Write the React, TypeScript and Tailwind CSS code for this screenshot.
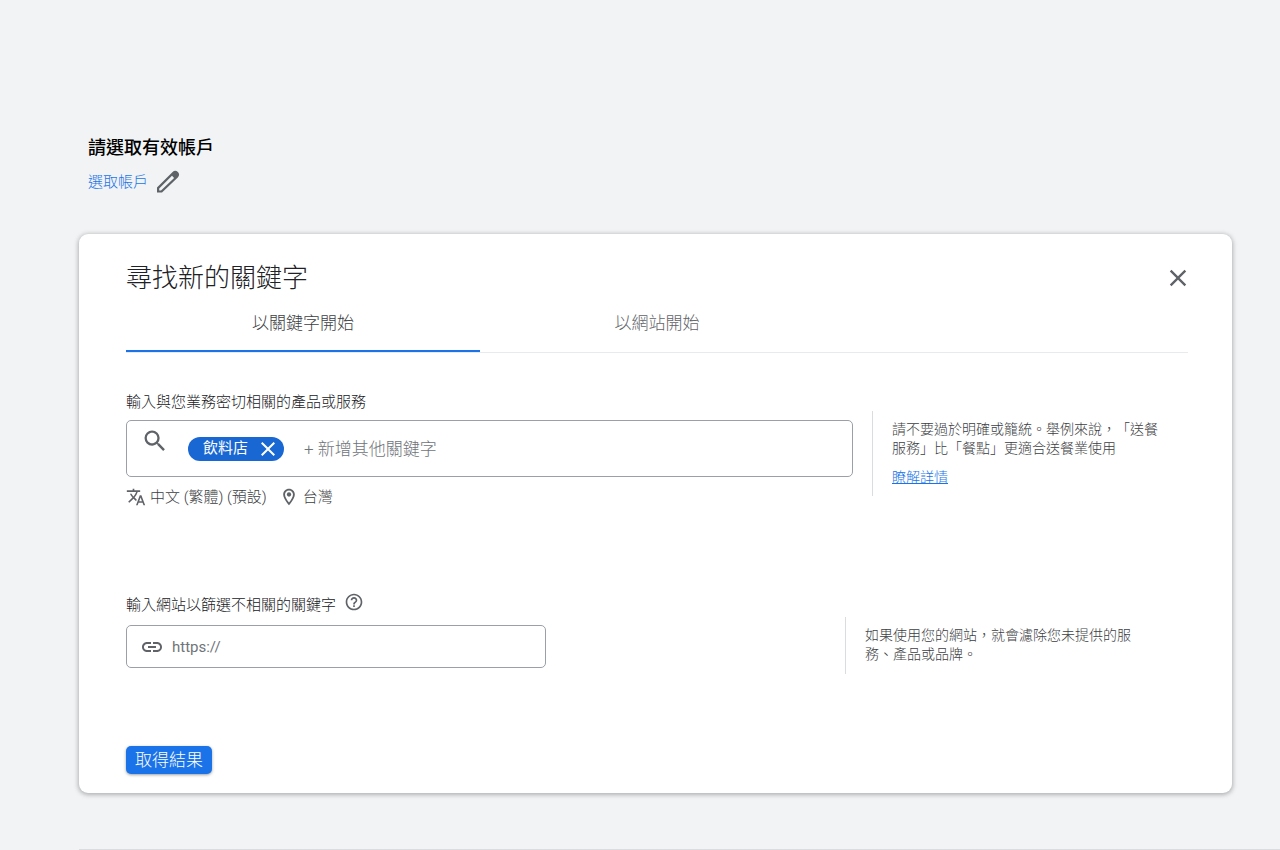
import { useState } from 'react';
import { MdClose, MdHelpOutline, MdLink, MdSearch, MdTranslate } from 'react-icons/md';

const tabs = ['以關鍵字開始', '以網站開始'];

function PencilIcon() {
  return (
    <svg width="24" height="24" viewBox="0 0 24 24" fill="currentColor" aria-hidden="true">
      <path
        fillRule="evenodd"
        d="M1 17.6 16.6 2Q19.2-.4 21.9 2 24.3 4.8 21.8 7.4L6 22.6H1ZM3.2 18.6V20.400H5L18.100 7.900 16 5.800Z"
      />
    </svg>
  );
}

function PinIcon() {
  return (
    <svg width="20" height="20" viewBox="0 0 24 24" fill="currentColor" aria-hidden="true">
      <path
        fillRule="evenodd"
        d="M12 2C8.1 2 5 5.1 5 9c0 5.3 7 13 7 13s7-7.7 7-13c0-3.9-3.1-7-7-7Zm0 2.2c2.7 0 4.8 2.1 4.8 4.8 0 2.8-2.6 6.9-4.8 9.600C9.8 15.9 7.2 11.8 7.2 9c0-2.7 2.1-4.8 4.8-4.8Z"
      />
      <circle cx="12" cy="9" r="2.6" />
    </svg>
  );
}

function AccountPicker() {
  return (
    <header className="pl-[9px]">
      <h1 className="text-[18px] leading-6 font-medium text-black">請選取有效帳戶</h1>
      <div className="mt-[7px] flex h-[30px] items-center gap-2">
        <a href="#account" className="text-[15px] leading-5 text-[#1a73e8]">
          選取帳戶
        </a>
        <button type="button" aria-label="編輯帳戶" className="text-[#5f6368]">
          <PencilIcon />
        </button>
      </div>
    </header>
  );
}

export default function App() {
  const [activeTab, setActiveTab] = useState(0);
  const [keywords, setKeywords] = useState(['飲料店']);

  return (
    <div
      lang="zh-Hant"
      className="min-h-screen bg-[#f1f3f4] pt-[136px] pl-[79px] font-light text-[#3c4043] [text-spacing-trim:space-all] font-['Roboto','Noto_Sans_CJK_TC',sans-serif]"
    >
      <AccountPicker />

      <main className="mt-[37px] mr-12 rounded-[9px] bg-white pt-7 pr-11 pb-[19px] pl-[47px] shadow-[0_1px_4px_1px_rgba(60,64,67,0.35)]">
        {/* Title */}
        <div className="flex items-center justify-between">
          <h2 className="text-[26px] leading-8 text-[#202124]">尋找新的關鍵字</h2>
          <button type="button" aria-label="關閉" className="-mr-1 text-[#5f6368]">
            <MdClose size={28} />
          </button>
        </div>

        {/* Tabs */}
        <div role="tablist" className="grid grid-cols-3 border-b border-[#e8eaed]">
          {tabs.map((tab, index) => (
            <button
              key={tab}
              type="button"
              role="tab"
              aria-selected={index === activeTab}
              onClick={() => setActiveTab(index)}
              className={
                index === activeTab
                  ? 'h-[58px] border-b-2 border-[#1a73e8] pt-1 text-[17px] text-[#3c4043]'
                  : 'h-[58px] border-b-2 border-transparent pt-1 text-[17px] text-[#5f6368]'
              }
            >
              {tab}
            </button>
          ))}
        </div>

        {/* Keywords */}
        <section className="mt-[39px] flex items-start">
          <div className="min-w-0 flex-1">
            <label htmlFor="keyword" className="block text-[15px] leading-5 text-[#202124]">
              輸入與您業務密切相關的產品或服務
            </label>
            <div className="mt-2 flex h-[57px] items-center rounded-[5px] border border-[#9aa0a6] px-[14px]">
              <MdSearch size={28} className="mt-1.5 shrink-0 self-start text-[#5f6368]" />
              {keywords.map((keyword) => (
                <span
                  key={keyword}
                  className="ml-[19px] flex h-6 shrink-0 items-center gap-2 rounded-full bg-[#1967d2] pr-1 pl-[15px] text-[15px] font-normal text-white"
                >
                  {keyword}
                  <button
                    type="button"
                    aria-label={`移除 ${keyword}`}
                    onClick={() => setKeywords(keywords.filter((k) => k !== keyword))}
                  >
                    <MdClose size={24} />
                  </button>
                </span>
              ))}
              <input
                id="keyword"
                type="text"
                placeholder="+ 新增其他關鍵字"
                className="ml-5 h-full min-w-0 flex-1 bg-transparent text-[17px] outline-none placeholder:text-[#6f7479]"
              />
            </div>
            <div className="mt-[10px] flex items-center text-[15px] leading-5 text-[#3c4043]">
              <MdTranslate size={20} className="text-[#5f6368]" />
              <span className="ml-1">中文 (繁體) (預設)</span>
              <span className="ml-3 text-[#5f6368]">
                <PinIcon />
              </span>
              <span className="ml-1">台灣</span>
            </div>
          </div>
          <aside className="mt-[19px] ml-[19px] h-[85px] w-[316px] border-l border-[#dadce0] pt-[9px] pl-[19px] text-[14px] leading-[19px] text-[#3c4043]">
            <p className="w-[276px]">
              請不要過於明確或籠統。舉例來說，「送餐服務」比「餐點」更適合送餐業使用
            </p>
            <a href="#learn-more" className="mt-[10px] inline-block text-[#1a73e8] underline">
              瞭解詳情
            </a>
          </aside>
        </section>

        {/* Website filter */}
        <section className="mt-[88px] flex items-start justify-between">
          <div className="w-[420px]">
            <div className="flex h-5 items-start gap-2">
              <label htmlFor="site" className="text-[15px] leading-5 text-[#202124]">
                輸入網站以篩選不相關的關鍵字
              </label>
              <button type="button" aria-label="說明" className="-mt-[3px] text-[#5f6368]">
                <MdHelpOutline size={20} />
              </button>
            </div>
            <div className="mt-[10px] flex h-[43px] items-center gap-2 rounded-[5px] border border-[#9aa0a6] px-[13px]">
              <MdLink size={24} className="shrink-0 text-[#5f6368]" />
              <input
                id="site"
                type="text"
                placeholder="https://"
                className="h-full min-w-0 flex-1 bg-transparent text-[15px] font-normal outline-none placeholder:text-[#6f7479]"
              />
            </div>
          </div>
          <aside className="mt-[22px] h-[57px] w-[343px] border-l border-[#dadce0] pt-[9px] pl-[19px] text-[14px] leading-[19px] text-[#3c4043]">
            <p className="w-[276px]">如果使用您的網站，就會濾除您未提供的服務、產品或品牌。</p>
          </aside>
        </section>

        <button
          type="button"
          className="mt-[72px] block h-7 rounded-[5px] bg-[#1a73e8] px-[9px] text-[17px] leading-7 font-light text-white shadow-[0_1px_3px_rgba(60,64,67,0.5)]"
        >
          取得結果
        </button>
      </main>

      <div className="mt-14 border-t border-[#dadce0]" />
    </div>
  );
}
